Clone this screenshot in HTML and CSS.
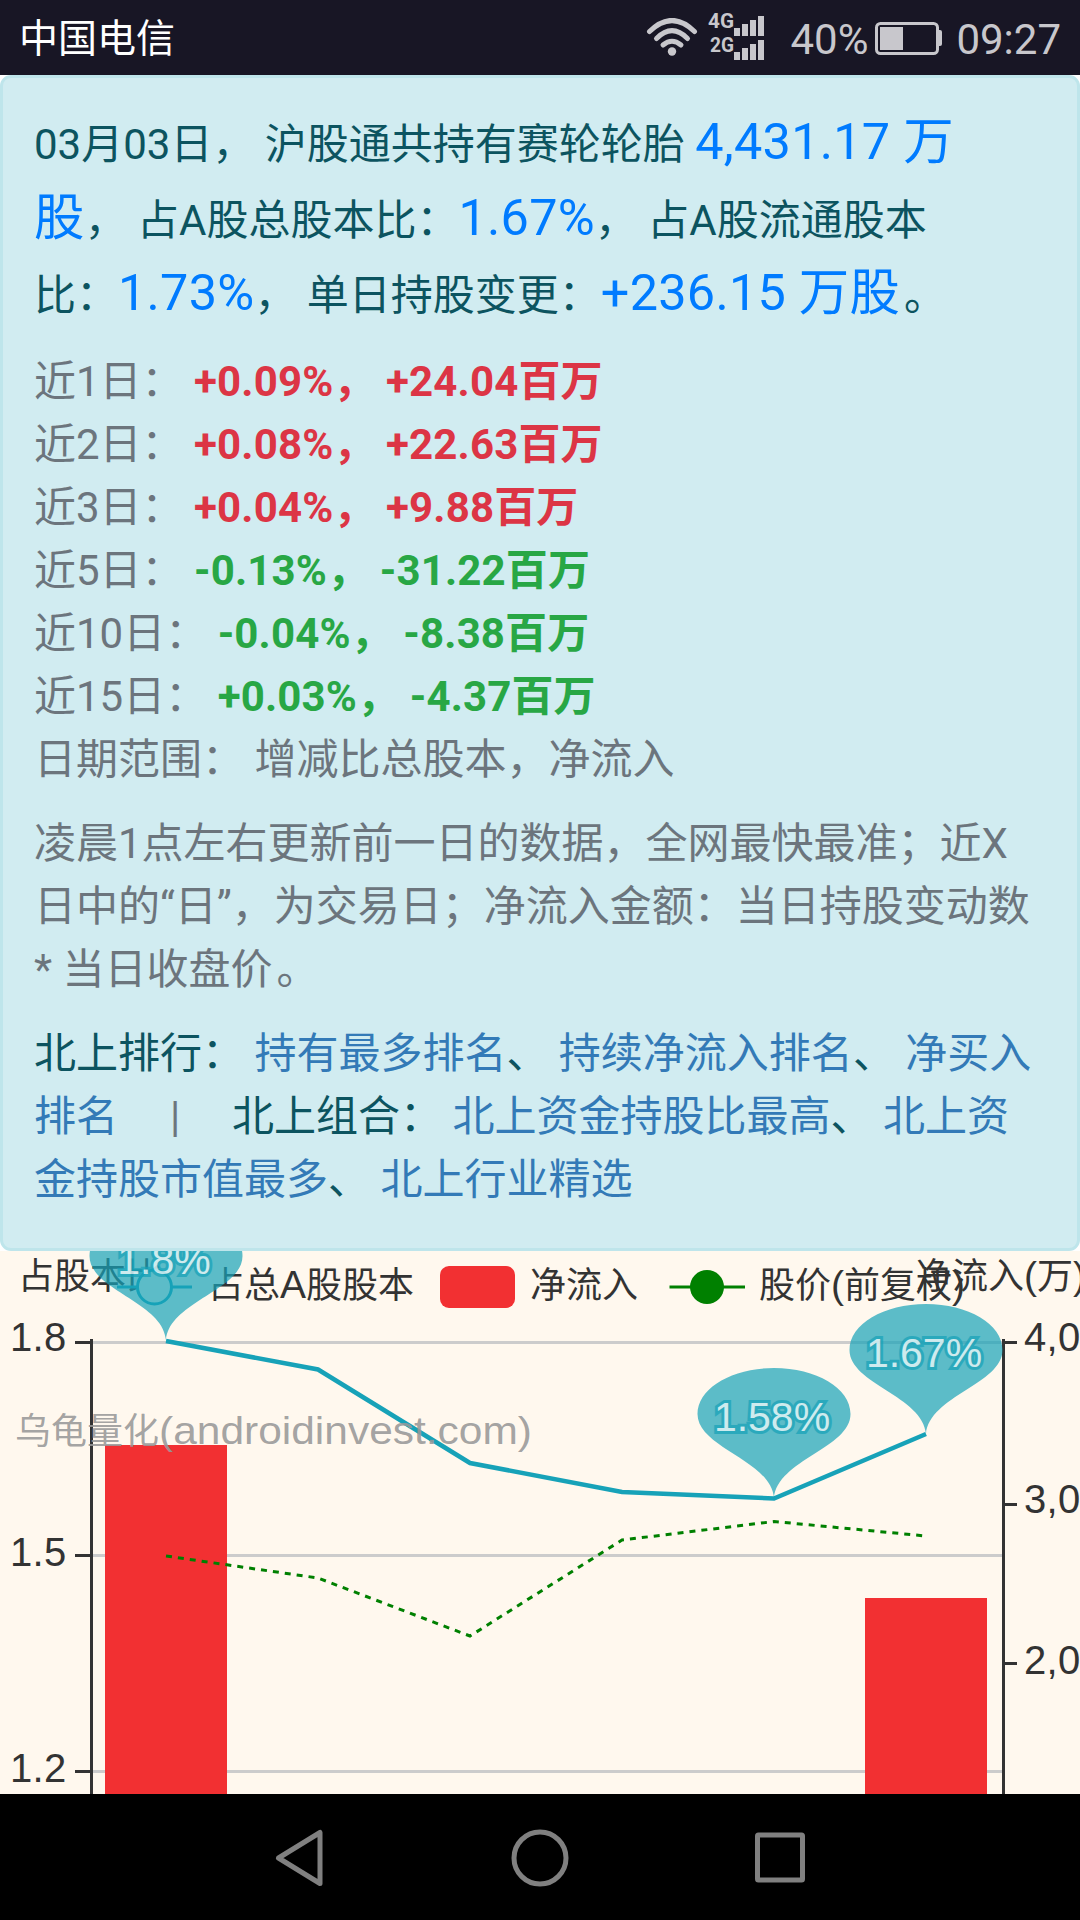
FILE: index.html
```html
<!DOCTYPE html>
<html lang="zh-CN">
<head>
  <meta charset="UTF-8" />
  <meta name="viewport" content="width=device-width, initial-scale=1.0" />
  <title>沪股通持股 - 赛轮轮胎</title>
  <link rel="stylesheet" href="styles.css">
</head>
<body>
  <header class="statusbar">
    <span class="carrier">中国电信</span>
    <svg class="wifi" width="52" height="40" viewBox="0 0 52 40" fill="none" stroke="#c8c7cc" stroke-width="5" stroke-linecap="round">
      <path d="M3.500 13.500Q26 -8.500 48.500 13.500"/>
      <path d="M10.500 20.500Q26 5 41.500 20.500"/>
      <path d="M17 27Q26 19.500 35 27"/>
      <circle cx="26" cy="33.500" r="4.200" fill="#c8c7cc" stroke="none"/>
    </svg>
    <svg class="signal" width="56" height="52" viewBox="0 0 56 52" fill="#c8c7cc">
      <text x="0" y="18" class="net" textLength="26" lengthAdjust="spacingAndGlyphs">4G</text>
      <text x="2" y="42" class="net" textLength="24" lengthAdjust="spacingAndGlyphs">2G</text>
      <path d="M26 18h6v8h-6zM34 14h6v12h-6zM42 10h6v16h-6zM50 6h6v20h-6z"/>
      <path d="M26 42h6v8h-6zM34 38h6v12h-6zM42 34h6v16h-6zM50 30h6v20h-6z"/>
    </svg>
    <span class="percent">40%</span>
    <svg class="battery" width="67" height="33" viewBox="0 0 67 33">
      <rect x="1.500" y="1.500" width="61" height="30" rx="4" fill="none" stroke="#c8c7cc" stroke-width="3"/>
      <rect x="5" y="5" width="23" height="23" fill="#c8c7cc"/>
      <path d="M63 8h2q2 0 2 2v12q0 2-2 2h-2z" fill="#c8c7cc"/>
    </svg>
    <span class="clock">09:27</span>
  </header>

  <main class="page">
    <div class="alert">
      <p class="summary">03月03日， 沪股通共持有赛轮轮胎 <span class="num">4,431.17 万<br>股</span>， 占A股总股本比：<span class="num">1.67%</span>， 占A股流通股本<br>比：<span class="num">1.73%</span>， 单日持股变更：<span class="num">+236.15 万股</span><span class="stop">。</span></p>
      <p class="muted">
        近1日： <b class="up">+0.09%， +24.04百万</b><br>
        近2日： <b class="up">+0.08%， +22.63百万</b><br>
        近3日： <b class="up">+0.04%， +9.88百万</b><br>
        近5日： <b class="down">-0.13%， -31.22百万</b><br>
        近10日： <b class="down">-0.04%， -8.38百万</b><br>
        近15日： <b class="down">+0.03%， -4.37百万</b><br>
        日期范围： 增减比总股本，净流入
      </p>
      <p class="muted">凌晨1点左右更新前一日的数据，全网最快最准；近X<br>日中的“日”，为交易日；净流入金额：当日持股变动数<br>* 当日收盘价<span class="stop">。</span></p>
      <p class="links">北上排行： <a href="#">持有最多排名</a>、 <a href="#">持续净流入排名</a>、 <a href="#">净买入<br>排名</a><span class="sep">|</span>北上组合： <a href="#">北上资金持股比最高</a>、 <a href="#">北上资<br>金持股市值最多</a>、 <a href="#">北上行业精选</a></p>
    </div>

    <svg class="chart" width="1080" height="543" viewBox="0 0 1080 543">
      <!-- split lines -->
      <path d="M92 91.500H1003M92 304.500H1003M92 520.500H1003" stroke="#ccc" stroke-width="3"/>

      <!-- net inflow bars -->
      <rect x="105" y="194" width="122" height="349" fill="#f23032"/>
      <rect x="865" y="347" width="122" height="196" fill="#f23032"/>

      <!-- axes -->
      <path d="M91.500 88V543M75 91.500H91M75 304.500H91M75 520.500H91" stroke="#333" stroke-width="3"/>
      <path d="M1003.500 88V543M1003 91.500H1017M1003 253.500H1017M1003 412.500H1017" stroke="#333" stroke-width="3"/>
      <g class="label tick">
        <text x="10" y="100">1.8</text>
        <text x="10" y="315">1.5</text>
        <text x="10" y="531">1.2</text>
        <text x="1024" y="100">4,000</text>
        <text x="1024" y="262">3,000</text>
        <text x="1024" y="423">2,000</text>
      </g>
      <g class="label">
        <text x="18" y="38">占股本比</text>
        <text x="916" y="38">净流入<tspan class="latin">(</tspan>万<tspan class="latin">)</tspan></text>
      </g>

      <!-- legend -->
      <path d="M117 36H192" stroke="#17a2b8" stroke-width="3"/>
      <circle cx="154.500" cy="36" r="17" fill="#fff8ee" stroke="#17a2b8" stroke-width="3"/>
      <rect x="440" y="15" width="75" height="42" rx="9" fill="#f23032"/>
      <path d="M669.500 36H745" stroke="green" stroke-width="3"/>
      <circle cx="707" cy="36" r="17" fill="green"/>
      <g class="label">
        <text x="208" y="47">占总<tspan class="latin">A</tspan>股股本</text>
        <text x="530" y="47">净流入</text>
        <text x="759" y="47">股价<tspan class="latin">(</tspan>前复权<tspan class="latin">)</tspan></text>
      </g>

      <!-- series -->
      <polyline points="166,90 318,118.500 470,212 622,241 774,247.500 926,183" fill="none" stroke="#17a2b8" stroke-width="4.500"/>
      <polyline points="166,305 318,327 470,385 622,289 774,270.500 926,285" fill="none" stroke="green" stroke-width="3" stroke-dasharray="6 6"/>

      <!-- mark points -->
      <g class="pins">
        <g transform="translate(166 89)">
          <path class="pin" d="M0 0C-3 -38 -76.500 -50 -76.500 -84C-76.500 -110 -42 -130 0 -130S76.500 -110 76.500 -84C76.500 -50 3 -38 0 0Z"/>
          <text x="-2" y="-66">1.8%</text>
        </g>
        <g transform="translate(774 247)">
          <path class="pin" d="M0 0C-3 -38 -76.500 -50 -76.500 -84C-76.500 -110 -42 -130 0 -130S76.500 -110 76.500 -84C76.500 -50 3 -38 0 0Z"/>
          <text x="-2" y="-67">1.58%</text>
        </g>
        <g transform="translate(926 183)">
          <path class="pin" d="M0 0C-3 -38 -76.500 -50 -76.500 -84C-76.500 -110 -42 -130 0 -130S76.500 -110 76.500 -84C76.500 -50 3 -38 0 0Z"/>
          <text x="-2" y="-67">1.67%</text>
        </g>
      </g>
      <text class="watermark" x="15" y="193">乌龟量化</text>
      <text class="watermark latin" x="159" y="193" textLength="373" lengthAdjust="spacingAndGlyphs">(androidinvest.com)</text>
    </svg>
  </main>

  <nav class="navbar">
    <svg width="50" height="58" viewBox="0 0 50 58"><path d="M45 3.500V54.500L3.500 29Z"/></svg>
    <svg width="58" height="58" viewBox="0 0 58 58"><circle cx="29" cy="29" r="26"/></svg>
    <svg width="50" height="58" viewBox="0 0 50 58"><rect x="2.500" y="6" width="45" height="45" rx="1"/></svg>
  </nav>
</body>
</html>
```
FILE: styles.css
```css
* { box-sizing: border-box; }
body { margin: 0; width: 1080px; height: 1920px; overflow: hidden; display: flex; flex-direction: column; background: #fff; font-family: Roboto, "Noto Sans CJK SC", sans-serif; font-size: 42px; line-height: 1.5; color: #0c5460; }
p { margin: 0 0 21px; white-space: nowrap; }
a { color: #337ab7; text-decoration: none; }
b { letter-spacing: .15px; }

.statusbar { flex: none; height: 75px; padding: 0 19px; display: flex; align-items: center; background: #181625; color: #c8c7cc; line-height: 71px; }
.statusbar span { padding-top: 4px; }
.carrier { color: #fff; font-size: 39px; margin-right: auto; }
.wifi { margin-right: 10px; }
.signal { margin: -3px 26px 0 0; }
.net { font: bold 21px Roboto, sans-serif; }
.percent { margin-right: 7px; }
.battery { margin: 2px 14px 0 0; }

.page { flex: none; height: 1719px; }
.alert { height: 1176px; padding: 26px 31px; background: #d1ecf1; border: 3px solid #bee5eb; border-radius: 11px; }
.summary { margin-bottom: 19.5px; }
.summary .num { font-size: 50.4px; letter-spacing: .25px; color: #007bff; }
.stop { margin-left: 4px; }
.muted { color: #6c757d; }
.up { color: #dc3545; }
.down { color: #28a745; }
.sep { display: inline-block; width: 114px; text-align: center; color: #6c757d; }

.chart { display: block; background: #fff8ee; }
.label { font: 36px "Liberation Sans", "Noto Sans CJK SC", sans-serif; fill: #333; }
.tick { font-size: 40px; letter-spacing: .3px; }
.latin { font-size: 39px; }
.watermark { font-family: "Liberation Sans", "Noto Sans CJK SC", sans-serif; font-size: 36px; fill: #999; fill-opacity: .9; }
.watermark.latin { font-size: 39px; }
.pins { text-anchor: middle; font: 41px "Liberation Sans", sans-serif; }
.pin { fill: #17a2b8; opacity: .7; }
.pins text { fill: #fff; stroke: #17a2b8; stroke-width: 6px; paint-order: stroke; opacity: .7; }

.navbar { flex: none; height: 126px; padding: 2px 275px 0; display: flex; align-items: center; justify-content: space-between; background: #000; }
.navbar svg { fill: none; stroke: #808080; stroke-width: 5; stroke-linejoin: round; }
```
